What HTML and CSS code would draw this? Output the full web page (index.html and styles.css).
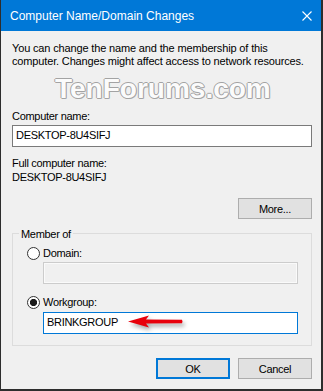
FILE: index.html
```html
<!DOCTYPE html>
<html lang="en">
<head>
  <meta charset="UTF-8">
  <meta name="viewport" content="width=device-width, initial-scale=1.0">
  <title>Computer Name/Domain Changes</title>
  <link rel="stylesheet" href="styles.css">
</head>
<body>
  <div class="window">
    <div class="titlebar">
      <span class="title">Computer Name/Domain Changes</span>
      <svg class="close" width="10" height="10" viewBox="0 0 10 10">
        <path d="M0.5 0.5 L9.5 9.5 M9.5 0.5 L0.5 9.5" stroke="#fff" stroke-width="1.1" fill="none"/>
      </svg>
    </div>

    <div class="content">
      <p class="intro">You can change the name and the membership of this<br>computer. Changes might affect access to network resources.</p>
      <div class="watermark">TenForums.com</div>

      <div class="label">Computer name:</div>
      <div class="field">DESKTOP-8U4SIFJ</div>

      <div class="label full-label">Full computer name:</div>
      <div class="value">DESKTOP-8U4SIFJ</div>

      <div class="more-row">
        <button class="btn">More...</button>
      </div>

      <fieldset class="group">
        <legend>Member of</legend>
        <div class="radio-row">
          <span class="radio"></span>Domain:
        </div>
        <div class="field disabled"></div>

        <div class="radio-row workgroup-row">
          <span class="radio checked"></span>Workgroup:
        </div>
        <div class="field focused">
          BRINKGROUP
          <svg class="arrow" width="60" height="22" viewBox="0 0 60 22">
            <polygon points="3,10.5 24,4.5 21,8.6 57,8.8 57.5,10.5 57,12.2 21,12.4 24,16.5" fill="#e8000b"/>
          </svg>
        </div>
      </fieldset>

      <div class="actions">
        <button class="btn default">OK</button>
        <button class="btn">Cancel</button>
      </div>
    </div>
  </div>
</body>
</html>
```

FILE: styles.css
```css
body {
  margin: 0;
  font-family: "Liberation Sans", Arial, sans-serif;
  font-size: 11px;
  letter-spacing: -0.3px;
  color: #000;
  background-color: #2d2d2d;
}
.window {
  width: 323px;
  height: 391px;
  box-sizing: border-box;
  border-left: 1px solid #2d2d2d;
  border-right: 2px solid #2d2d2d;
  border-bottom: 2px solid #2d2d2d;
  background-color: #f0f0f0;
}
.titlebar {
  display: flex;
  align-items: center;
  justify-content: space-between;
  height: 31px;
  padding: 0 9px 0 9px;
  background-color: #0078d7;
  color: white;
}
.title {
  font-size: 12px;
  line-height: 14px;
  letter-spacing: 0;
}
.close {
  display: block;
}
.content {
  position: relative;
  padding: 11px 9px 0 11px;
  line-height: 13px;
}
.intro {
  margin: 0;
  white-space: nowrap;
  letter-spacing: -0.15px;
}
.watermark {
  position: absolute;
  left: 54px;
  top: 44px;
  font-size: 28px;
  line-height: 27px;
  font-weight: bold;
  letter-spacing: 0;
  color: #fbfbfb;
  text-shadow: 1px 0 #a3a3a3, -1px 0 #a3a3a3, 0 1px #a3a3a3, 0 -1px #a3a3a3, 1px 1px #b8b8b8;
}
.label {
  margin-top: 42px;
}
.full-label {
  margin-top: 10px;
}
.value {
  margin-top: 1px;
}
.field {
  position: relative;
  height: 22px;
  box-sizing: border-box;
  padding: 1px 3px 3px;
  margin-top: 2px;
  line-height: 16px;
  border: 1px solid #7a7a7a;
  background-color: white;
}
.field.disabled {
  border-color: #cccccc;
  background-color: #f0f0f0;
  box-shadow: inset 0 0 0 1px #fafafa;
}
.field.focused {
  border-color: #0078d7;
}
.more-row {
  display: flex;
  justify-content: flex-end;
  margin-top: 14px;
}
.btn {
  width: 74px;
  height: 21px;
  box-sizing: border-box;
  padding: 0;
  font-family: inherit;
  font-size: 11px;
  letter-spacing: inherit;
  color: #000;
  background-color: #e1e1e1;
  border: 1px solid #adadad;
}
.btn.default {
  border: 2px solid #0078d7;
}
.group {
  margin: 7px 0 0 0;
  padding: 6px 13px 11px 14px;
  border: 1px solid #dcdcdc;
}
.group legend {
  margin-left: -8px;
  padding: 2px 2px 0;
  line-height: 13px;
}
.group .field {
  margin-left: 16px;
}
.radio-row {
  display: flex;
  align-items: center;
  gap: 3px;
  height: 13px;
}
.workgroup-row {
  margin-top: 12px;
}
.workgroup-row + .field {
  margin-top: 3px;
}
.radio {
  width: 13px;
  height: 13px;
  box-sizing: border-box;
  border: 1px solid #333;
  border-radius: 50%;
  background-color: white;
}
.radio.checked {
  background: radial-gradient(circle, #1a1a1a 3.3px, white 3.9px);
}
.arrow {
  position: absolute;
  left: 81px;
  top: -2px;
  filter: drop-shadow(2px 3px 2px rgba(0, 0, 0, 0.35));
}
.actions {
  display: flex;
  justify-content: flex-end;
  gap: 8px;
  margin-top: 12px;
}
```
